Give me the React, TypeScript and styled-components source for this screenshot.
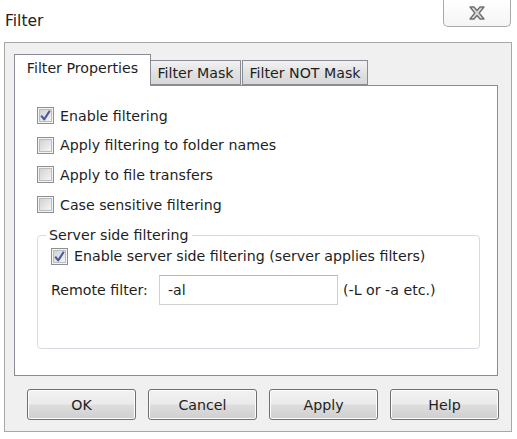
import styled, { createGlobalStyle } from 'styled-components';

const GlobalStyle = createGlobalStyle`
  html, body {
    margin: 0;
    padding: 0;
    background: #ffffff;
  }
  body {
    font-family: 'DejaVu Sans', Verdana, sans-serif;
    font-size: 14.2px;
    color: #1e1e1e;
  }
`;

const Window = styled.div`
  width: 517px;
  height: 439px;
  display: flex;
  flex-direction: column;
  background: #ffffff;
  overflow: hidden;
`;

const TitleBar = styled.div`
  height: 42px;
  display: flex;
  justify-content: space-between;
  align-items: flex-start;
`;

const Title = styled.div`
  margin: 12px 0 0 5px;
  font-size: 15.5px;
  color: #222;
`;

const CloseButton = styled.div`
  width: 66px;
  height: 26px;
  margin-right: 6px;
  border: 1px solid #a9a9a9;
  border-top: none;
  border-radius: 0 0 5px 5px;
  background: linear-gradient(#ffffff, #f4f4f4);
  display: flex;
  align-items: center;
  justify-content: center;
`;

const Frame = styled.div`
  margin: 0 5px 0 4px;
  height: 390px;
  box-sizing: border-box;
  border: 1px solid #a8a8a8;
  background: #f0f0f0;
  padding: 11px 0 0 9px;
  display: flex;
  flex-direction: column;
`;

const TabStrip = styled.div`
  display: flex;
  align-items: flex-end;
  height: 31px;
  position: relative;
  z-index: 1;
`;

const Tab = styled.div<{ active?: boolean; w: number }>`
  width: ${({ w }) => w}px;
  height: ${({ active }) => (active ? 32 : 25)}px;
  box-sizing: border-box;
  border: 1px solid #898c95;
  border-bottom: ${({ active }) => (active ? 'none' : '1px solid #898c95')};
  margin-bottom: ${({ active }) => (active ? -1 : 0)}px;
  margin-right: ${({ active }) => (active ? 0 : 2)}px;
  margin-left: ${({ active }) => (active ? 0 : -1)}px;
  background: ${({ active }) =>
    active ? '#ffffff' : 'linear-gradient(#f2f2f2, #e0e0e0 55%, #d8d8d8)'};
  display: flex;
  justify-content: center;
  align-items: ${({ active }) => (active ? 'flex-start' : 'center')};
  padding-top: ${({ active }) => (active ? 5 : 1)}px;
  white-space: nowrap;
  &:first-child {
    margin-left: 0;
  }
`;

const Panel = styled.div`
  width: 484px;
  height: 291px;
  box-sizing: border-box;
  border: 1px solid #898c95;
  background: #ffffff;
  padding: 15px 0 0 22px;
`;

const CheckRow = styled.label<{ h?: number }>`
  display: flex;
  align-items: center;
  gap: 6px;
  height: ${({ h }) => h ?? 29.6}px;
  white-space: nowrap;
`;

const Box = styled.span`
  width: 17px;
  height: 17px;
  flex: none;
  display: block;
`;

const Group = styled.fieldset`
  margin: 8px 0 0 0;
  width: 443px;
  height: 122px;
  box-sizing: border-box;
  border: 1px solid #d5dbe0;
  border-radius: 4px;
  padding: 0 0 0 13px;
`;

const Legend = styled.legend`
  padding: 0 3px;
  margin-left: -5px;
`;

const FieldRow = styled.div`
  display: flex;
  align-items: center;
  margin-top: 6px;
  height: 30px;
`;

const FieldLabel = styled.span`
  width: 108px;
  white-space: nowrap;
`;

const TextInput = styled.div`
  width: 179px;
  height: 30px;
  box-sizing: border-box;
  border: 1px solid #d0d0d0;
  border-top-color: #b8b8b8;
  background: #ffffff;
  padding: 0 0 0 8px;
  display: flex;
  align-items: center;
  margin-right: 5px;
`;

const Hint = styled.span`
  white-space: nowrap;
`;

const ButtonRow = styled.div`
  display: flex;
  gap: 12px;
  margin: 13px 0 0 13px;
`;

const Button = styled.div`
  width: 109px;
  height: 31px;
  box-sizing: border-box;
  border: 1px solid #707070;
  border-radius: 3px;
  background: linear-gradient(#f2f2f2 0%, #ebebeb 48%, #dddddd 52%, #cfcfcf 100%);
  box-shadow: inset 0 0 0 1px #fcfcfc;
  display: flex;
  align-items: center;
  justify-content: center;
`;

function CheckBox({ checked }: { checked?: boolean }) {
  return (
    <Box>
      <svg width="17" height="17" viewBox="0 0 17 17">
        <defs>
          <linearGradient id="cbg" x1="0" y1="0" x2="1" y2="1">
            <stop offset="0" stopColor="#cfd1d4" />
            <stop offset="1" stopColor="#f6f6f6" />
          </linearGradient>
        </defs>
        <rect x="0.5" y="0.5" width="16" height="16" fill="#f4f4f4" stroke="#8e8f8f" />
        <rect x="2.5" y="2.5" width="12" height="12" fill="url(#cbg)" stroke="#b9bcc0" />
        {checked && (
          <path
            d="M4.2 8.6 L7.2 12.4 L12.8 3.8"
            fill="none"
            stroke="#4b5a96"
            strokeWidth="2.1"
            strokeLinejoin="round"
          />
        )}
      </svg>
    </Box>
  );
}

export default function App() {
  return (
    <>
      <GlobalStyle />
      <Window>
        <TitleBar>
          <Title>Filter</Title>
          <CloseButton>
            <svg width="22" height="16" viewBox="0 0 22 16">
              <path
                d="M4 2 H8 L11 5.5 L14 2 H18 L13.2 8 L18 14 H14 L11 10.5 L8 14 H4 L8.8 8 Z"
                fill="#d8d8d8"
                stroke="#6f6f6f"
                strokeWidth="1.3"
                strokeLinejoin="round"
              />
            </svg>
          </CloseButton>
        </TitleBar>
        <Frame>
          <TabStrip>
            <Tab active w={137}>Filter Properties</Tab>
            <Tab w={91}>Filter Mask</Tab>
            <Tab w={126}>Filter NOT Mask</Tab>
          </TabStrip>
          <Panel>
            <CheckRow>
              <CheckBox checked />
              Enable filtering
            </CheckRow>
            <CheckRow>
              <CheckBox />
              Apply filtering to folder names
            </CheckRow>
            <CheckRow>
              <CheckBox />
              Apply to file transfers
            </CheckRow>
            <CheckRow>
              <CheckBox />
              Case sensitive filtering
            </CheckRow>
            <Group>
              <Legend>Server side filtering</Legend>
              <CheckRow h={26}>
                <CheckBox checked />
                Enable server side filtering (server applies filters)
              </CheckRow>
              <FieldRow>
                <FieldLabel>Remote filter:</FieldLabel>
                <TextInput>-al</TextInput>
                <Hint>(-L or -a etc.)</Hint>
              </FieldRow>
            </Group>
          </Panel>
          <ButtonRow>
            <Button>OK</Button>
            <Button>Cancel</Button>
            <Button>Apply</Button>
            <Button>Help</Button>
          </ButtonRow>
        </Frame>
      </Window>
    </>
  );
}
